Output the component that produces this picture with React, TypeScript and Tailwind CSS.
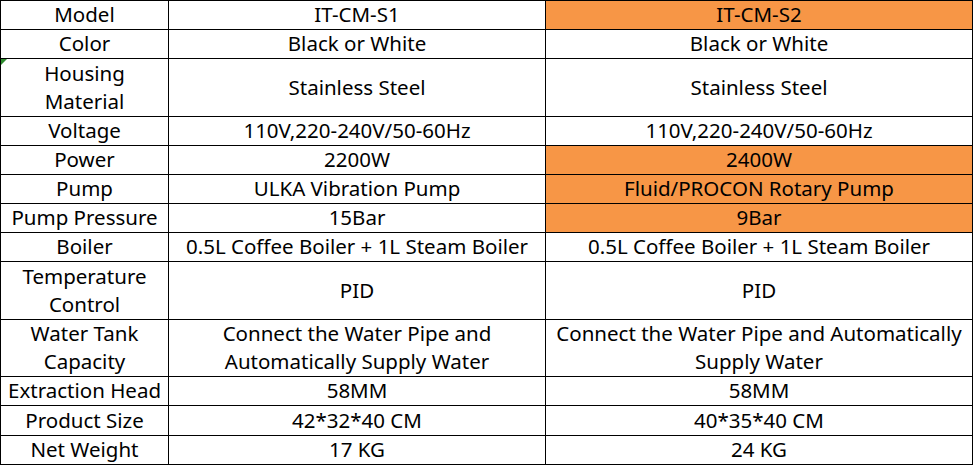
const rows: { label: string[]; a: string[]; b: string[]; h: string; hl?: boolean }[] = [
  { label: ['Model'], a: ['IT-CM-S1'], b: ['IT-CM-S2'], h: 'h-[28px]', hl: true },
  { label: ['Color'], a: ['Black or White'], b: ['Black or White'], h: 'h-[28px]' },
  { label: ['Housing', 'Material'], a: ['Stainless Steel'], b: ['Stainless Steel'], h: 'h-[57px]' },
  { label: ['Voltage'], a: ['110V,220-240V/50-60Hz'], b: ['110V,220-240V/50-60Hz'], h: 'h-[28px]' },
  { label: ['Power'], a: ['2200W'], b: ['2400W'], h: 'h-[28px]', hl: true },
  { label: ['Pump'], a: ['ULKA Vibration Pump'], b: ['Fluid/PROCON Rotary Pump'], h: 'h-[28px]', hl: true },
  { label: ['Pump Pressure'], a: ['15Bar'], b: ['9Bar'], h: 'h-[28px]', hl: true },
  { label: ['Boiler'], a: ['0.5L Coffee Boiler + 1L Steam Boiler'], b: ['0.5L Coffee Boiler + 1L Steam Boiler'], h: 'h-[28px]' },
  { label: ['Temperature', 'Control'], a: ['PID'], b: ['PID'], h: 'h-[57px]' },
  {
    label: ['Water Tank', 'Capacity'],
    a: ['Connect the Water Pipe and', 'Automatically Supply Water'],
    b: ['Connect the Water Pipe and Automatically', 'Supply Water'],
    h: 'h-[56px]',
  },
  { label: ['Extraction Head'], a: ['58MM'], b: ['58MM'], h: 'h-[28px]' },
  { label: ['Product Size'], a: ['42*32*40 CM'], b: ['40*35*40 CM'], h: 'h-[29px]' },
  { label: ['Net Weight'], a: ['17 KG'], b: ['24 KG'], h: 'h-[28px]' },
];

function Cell({ lines, className = '' }: { lines: string[]; className?: string }) {
  return (
    <div className={`flex flex-col items-center justify-center text-center leading-[28px] pb-[2px] ${className}`}>
      {lines.map((l, i) => (
        <span key={i} className="whitespace-nowrap">{l}</span>
      ))}
    </div>
  );
}

export default function App() {
  return (
    <div className="w-[973px] h-[465px] bg-white">
      <div
        className="relative grid grid-cols-[167px_376px_426px] gap-px p-px bg-black text-[20.5px] text-black w-[973px]"
        style={{ fontFamily: '"Noto Sans", "Open Sans", sans-serif' }}
      >
        {rows.map((r, i) => (
          <div key={i} className="contents">
            <Cell lines={r.label} className={`bg-white ${r.h}`} />
            <Cell lines={r.a} className={`bg-white ${r.h}`} />
            <Cell lines={r.b} className={`${r.hl ? 'bg-[#f79646]' : 'bg-white'} ${r.h}`} />
          </div>
        ))}
        {/* comment marker in the Housing cell */}
        <div className="absolute left-px top-[59px] w-0 h-0 border-t-[6px] border-r-[6px] border-t-[#2e8b2e] border-r-transparent" />
      </div>
    </div>
  );
}
